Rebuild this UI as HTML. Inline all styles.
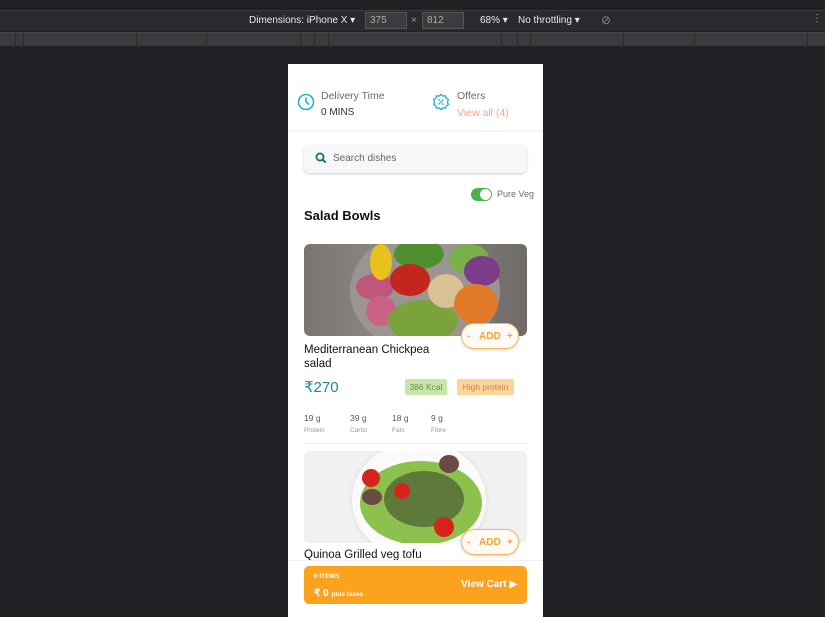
<!DOCTYPE html>
<html><head><meta charset="utf-8"><style>
*{box-sizing:border-box;margin:0;padding:0}
body{width:825px;height:617px;background:#202124;font-family:"Liberation Sans",sans-serif;position:relative;overflow:hidden}
.abs{position:absolute}
.tb{top:10px;left:0;width:825px;height:21px;background:#292a2d;border-top:1px solid #3c3c3c;color:#e8eaed;font-size:10px}
.ruler{top:32px;left:0;width:825px;height:14px;background:#3a3b3e;border-top:1px solid #444}
.ruler i{position:absolute;top:0;width:1px;height:14px;background:#2a2a2a}
.phone{left:288px;top:64px;width:255px;height:553px;background:#fff;overflow:hidden}
.g{color:#6b6b6b}
.blob{position:absolute;border-radius:50%}
.add{position:absolute;width:58px;height:26px;border:1px solid #f5b561;border-radius:13px;background:#fffaf3;color:#f7a23a;font-weight:bold;font-size:10px;box-shadow:0 1px 3px rgba(0,0,0,.15)}
.add span{position:absolute;top:7px}
</style></head><body>
<div class="abs tb">
 <span class="abs" style="left:249px;top:4px">Dimensions: iPhone X ▾</span>
 <div class="abs" style="left:365px;top:1px;width:42px;height:17px;background:#3b3c3f;border:1px solid #555;color:#aaa;padding:2px 4px">375</div>
 <span class="abs" style="left:411px;top:4px;color:#999">×</span>
 <div class="abs" style="left:422px;top:1px;width:42px;height:17px;background:#3b3c3f;border:1px solid #555;color:#aaa;padding:2px 4px">812</div>
 <span class="abs" style="left:480px;top:4px">68% ▾</span>
 <span class="abs" style="left:518px;top:4px">No throttling ▾</span>
 <span class="abs" style="left:601px;top:2px;color:#888;font-size:12px">⊘</span>
 <span class="abs" style="left:812px;top:2px;color:#aaa">⋮</span>
</div>
<div class="abs ruler"><i style="left:15px"></i><i style="left:23px"></i><i style="left:136px"></i><i style="left:206px"></i><i style="left:300px"></i><i style="left:314px"></i><i style="left:328px"></i><i style="left:501px"></i><i style="left:517px"></i><i style="left:530px"></i><i style="left:623px"></i><i style="left:694px"></i><i style="left:807px"></i></div>

<div class="abs phone">
 <svg class="abs" style="left:9px;top:29px" width="18" height="18" viewBox="0 0 18 18"><circle cx="9" cy="9" r="7.5" fill="none" stroke="#1eb1c3" stroke-width="1.5"/><path d="M9 4.5V9l3 2.5" fill="none" stroke="#1eb1c3" stroke-width="1.5"/></svg>
 <div class="abs g" style="left:33px;top:26px;font-size:10.5px">Delivery Time</div>
 <div class="abs" style="left:33px;top:43px;font-size:10px;color:#333">0 MINS</div>
 <svg class="abs" style="left:144px;top:29px" width="18" height="18" viewBox="0 0 18 18"><path d="M9 1.5l2 1.6 2.5-.3.7 2.4 2.2 1.3-1 2.5 1 2.5-2.2 1.3-.7 2.4-2.5-.3L9 16.5 7 14.9l-2.5.3-.7-2.4-2.2-1.3 1-2.5-1-2.5 2.2-1.3.7-2.4 2.5.3z" fill="none" stroke="#1eb1c3" stroke-width="1.3"/><path d="M6.5 11.5l5-5" stroke="#1eb1c3" stroke-width="1.2"/><circle cx="7" cy="7" r=".9" fill="#1eb1c3"/><circle cx="11" cy="11" r=".9" fill="#1eb1c3"/></svg>
 <div class="abs g" style="left:169px;top:26px;font-size:10.5px">Offers</div>
 <div class="abs" style="left:169px;top:43px;font-size:10.5px;color:#f7a486">View all (4)</div>
 <div class="abs" style="left:0;top:66px;width:255px;height:2px;background:#f4f4f4"></div>
 <div class="abs" style="left:16px;top:81px;width:223px;height:28px;background:#f7f7f7;border-radius:5px;box-shadow:0 1px 2px rgba(0,0,0,.2)"></div>
 <svg class="abs" style="left:27px;top:88px" width="12" height="12" viewBox="0 0 12 12"><circle cx="5" cy="5" r="3.6" fill="none" stroke="#1a6e7a" stroke-width="1.8"/><path d="M7.6 7.6l3 3" stroke="#1a6e7a" stroke-width="2"/></svg>
 <div class="abs" style="left:45px;top:89px;font-size:10px;color:#666">Search dishes</div>
 <div class="abs" style="left:183px;top:124px;width:21px;height:13px;border-radius:7px;background:#4caf50"><div class="abs" style="right:1px;top:1px;width:11px;height:11px;border-radius:50%;background:#fff"></div></div>
 <div class="abs g" style="left:209px;top:125px;font-size:9px">Pure Veg</div>
 <div class="abs" style="left:16px;top:144px;font-size:13px;font-weight:bold;color:#111">Salad Bowls</div>

 <div class="abs" style="left:16px;top:180px;width:223px;height:92px;border-radius:6px;overflow:hidden;background:linear-gradient(90deg,#7a7570,#8e8984 40%,#6f6b68)">
  <div class="blob" style="left:46px;top:-14px;width:150px;height:122px;background:#9a9590"></div>
  <div class="blob" style="left:52px;top:30px;width:38px;height:26px;background:#c0567c"></div>
  <div class="blob" style="left:62px;top:52px;width:30px;height:30px;background:#c96286"></div>
  <div class="blob" style="left:66px;top:0px;width:22px;height:36px;background:#e8c21b"></div>
  <div class="blob" style="left:90px;top:-5px;width:50px;height:30px;background:#4e8f2f"></div>
  <div class="blob" style="left:86px;top:20px;width:40px;height:32px;background:#c2261d"></div>
  <div class="blob" style="left:84px;top:56px;width:70px;height:42px;background:#7aa33d"></div>
  <div class="blob" style="left:124px;top:30px;width:36px;height:34px;background:#d9c095"></div>
  <div class="blob" style="left:145px;top:0px;width:40px;height:30px;background:#79b04a"></div>
  <div class="blob" style="left:160px;top:12px;width:36px;height:30px;background:#7d3c8a"></div>
  <div class="blob" style="left:150px;top:40px;width:44px;height:40px;background:#e07a28"></div>
 </div>
 <div class="add" style="left:173px;top:259px"><span style="left:5px">-</span><span style="left:17px">ADD</span><span style="left:45px">+</span></div>
 <div class="abs" style="left:16px;top:279px;font-size:11.5px;color:#111;line-height:14px">Mediterranean Chickpea<br>salad</div>
 <div class="abs" style="left:16px;top:314px;font-size:15px;color:#1a8a94">₹270</div>
 <div class="abs" style="left:117px;top:315px;width:42px;height:16px;background:#c8e6a8;color:#6e8d50;font-size:8.5px;text-align:center;line-height:16px;border-radius:2px">386 Kcal</div>
 <div class="abs" style="left:169px;top:315px;width:57px;height:16px;background:#fdd49a;color:#c08a4a;font-size:8.5px;text-align:center;line-height:16px;border-radius:2px">High protein</div>
 <div class="abs" style="left:16px;top:349px;font-size:8.5px;color:#555">19 g</div><div class="abs" style="left:16px;top:363px;font-size:6.5px;color:#999">Protein</div>
 <div class="abs" style="left:62px;top:349px;font-size:8.5px;color:#555">39 g</div><div class="abs" style="left:62px;top:363px;font-size:6.5px;color:#999">Carbs</div>
 <div class="abs" style="left:104px;top:349px;font-size:8.5px;color:#555">18 g</div><div class="abs" style="left:104px;top:363px;font-size:6.5px;color:#999">Fats</div>
 <div class="abs" style="left:143px;top:349px;font-size:8.5px;color:#555">9 g</div><div class="abs" style="left:143px;top:363px;font-size:6.5px;color:#999">Fibre</div>
 <div class="abs" style="left:16px;top:379px;width:223px;height:1px;background:#eee"></div>

 <div class="abs" style="left:16px;top:387px;width:223px;height:92px;border-radius:6px;overflow:hidden;background:#f1f1f1">
  <div class="blob" style="left:48px;top:-10px;width:134px;height:118px;background:#fafafa;box-shadow:0 0 6px #ddd"></div>
  <div class="blob" style="left:56px;top:10px;width:122px;height:84px;background:#8cc14d"></div>
  <div class="blob" style="left:80px;top:20px;width:80px;height:56px;background:#5d7a3a"></div>
  <div class="blob" style="left:58px;top:18px;width:18px;height:18px;background:#d8231c"></div>
  <div class="blob" style="left:90px;top:32px;width:16px;height:16px;background:#d8231c"></div>
  <div class="blob" style="left:130px;top:66px;width:20px;height:20px;background:#d8231c"></div>
  <div class="blob" style="left:58px;top:38px;width:20px;height:16px;background:#6b4a44"></div>
  <div class="blob" style="left:135px;top:4px;width:20px;height:18px;background:#6b4a44"></div>
 </div>
 <div class="add" style="left:173px;top:465px"><span style="left:5px">-</span><span style="left:17px">ADD</span><span style="left:45px">+</span></div>
 <div class="abs" style="left:16px;top:485px;font-size:11.5px;color:#111">Quinoa Grilled veg tofu</div>

 <div class="abs" style="left:0;top:496px;width:255px;height:57px;background:#fff;border-top:1px solid #f0f0f0"></div>
 <div class="abs" style="left:16px;top:502px;width:223px;height:38px;background:#fda21d;border-radius:5px;color:#fff;font-weight:bold">
  <div class="abs" style="left:10px;top:7px;font-size:6.5px">0 ITEMS</div>
  <div class="abs" style="left:10px;top:22px;font-size:10px">₹ 0 <span style="font-size:6.5px">plus taxes</span></div>
  <div class="abs" style="right:10px;top:13px;font-size:10px">View Cart ▶</div>
 </div>
</div>
</body></html>
